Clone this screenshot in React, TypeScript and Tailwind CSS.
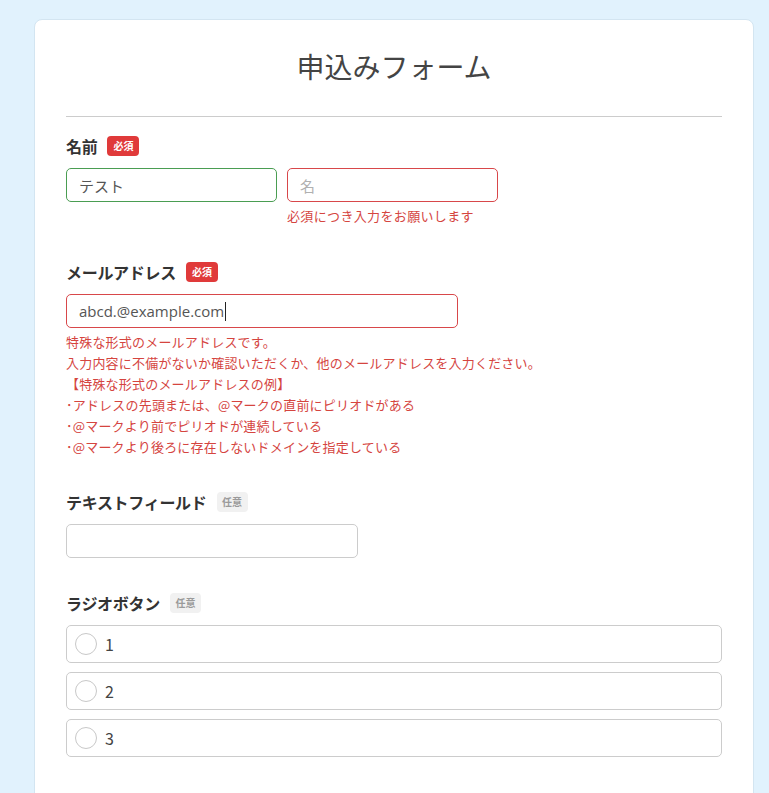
const font = { fontFamily: '"Noto Sans CJK JP", "Noto Sans", sans-serif' };

const Badge = ({ required }: { required?: boolean }) =>
  required ? (
    <span className="flex h-5 w-8 items-center justify-center rounded-[4px] bg-[#e03a3a] text-[10px] font-bold leading-none text-white">
      必須
    </span>
  ) : (
    <span className="flex h-5 w-[31px] items-center justify-center rounded-[4px] bg-[#f1f1f1] text-[10px] font-bold leading-none text-[#9a9a9a]">
      任意
    </span>
  );

const Label = ({ text, required }: { text: string; required?: boolean }) => (
  <div className="flex h-6 items-center gap-[10px]">
    <span className="text-[16px] font-bold leading-6 tracking-[-0.3px] text-[#333]">{text}</span>
    <Badge required={required} />
  </div>
);

const emailErrors = [
  "特殊な形式のメールアドレスです。",
  "入力内容に不備がないか確認いただくか、他のメールアドレスを入力ください。",
  "【特殊な形式のメールアドレスの例】",
  "･アドレスの先頭または、@マークの直前にピリオドがある",
  "･@マークより前でピリオドが連続している",
  "･@マークより後ろに存在しないドメインを指定している",
];

export default function App() {
  return (
    <div className="min-h-[793px] bg-[#e1f2fd] pt-[19px]" style={font}>
      <div className="ml-[34px] w-[720px] rounded-t-lg border border-[#d3e5f1] bg-white px-[31px] pb-10">
        <h1 className="pt-[26px] text-center text-[28px] font-normal leading-10 text-[#444]">
          申込みフォーム
        </h1>
        <div className="mt-[30px] h-px bg-[#cccccc]" />

        {/* 名前 */}
        <section className="mt-[17px]">
          <Label text="名前" required />
          <div className="mt-[10px] flex gap-[10px]">
            <input
              readOnly
              value="テスト"
              className="h-[34px] w-[211px] rounded-[5px] border border-[#4a9d52] px-3 text-[15px] text-[#555] outline-none"
            />
            <div>
              <input
                readOnly
                placeholder="名"
                className="h-[34px] w-[211px] rounded-[5px] border border-[#d8474a] px-3 text-[15px] text-[#555] outline-none placeholder:text-[#b0b0b0]"
              />
              <p className="mt-1 text-[13px] leading-[19px] tracking-[0.35px] text-[#d5453f]">
                必須につき入力をお願いします
              </p>
            </div>
          </div>
        </section>

        {/* メールアドレス */}
        <section className="mt-[35px]">
          <Label text="メールアドレス" required />
          <div className="mt-[10px] flex h-[34px] w-[392px] items-center rounded-[5px] border border-[#d8474a] px-3 text-[15px] text-[#555]">
            <span style={{ fontFamily: '"Open Sans", "Noto Sans", sans-serif' }}>abcd.@example.com</span>
            <span className="ml-px inline-block h-[19px] w-px bg-[#222]" />
          </div>
          <div className="mt-[3px] text-[13px] leading-[21px] tracking-[0.2px] text-[#d5453f]">
            {emailErrors.map((line) => (
              <p key={line}>{line}</p>
            ))}
          </div>
        </section>

        {/* テキストフィールド */}
        <section className="mt-[33px]">
          <Label text="テキストフィールド" />
          <input
            readOnly
            className="mt-[10px] block h-[34px] w-[292px] rounded-[5px] border border-[#cccccc] px-3 text-[15px] outline-none"
          />
        </section>

        {/* ラジオボタン */}
        <section className="mt-[33px]">
          <Label text="ラジオボタン" />
          <div className="mt-[10px] flex flex-col gap-[9px]">
            {["1", "2", "3"].map((v) => (
              <label
                key={v}
                className="flex h-[38px] items-center gap-2 rounded-[5px] border border-[#cccccc] px-2"
              >
                <span className="h-[22px] w-[22px] rounded-full border border-[#c8c8c8]" />
                <span className="text-[16px] text-[#444]">{v}</span>
              </label>
            ))}
          </div>
        </section>
      </div>
    </div>
  );
}
